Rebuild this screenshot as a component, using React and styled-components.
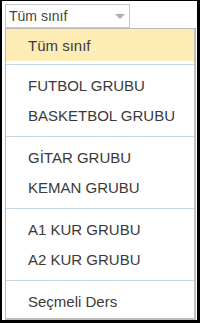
import React from 'react'
import styled, { createGlobalStyle } from 'styled-components'

const GlobalStyle = createGlobalStyle`
  html, body {
    margin: 0;
    padding: 0;
    background: #000;
  }
  * {
    box-sizing: border-box;
  }
`

const Frame = styled.div`
  width: 200px;
  height: 323px;
  background: #fff;
  border-style: solid;
  border-color: #000;
  border-width: 1px 3px 3px 2px;
  padding: 3px 0 0 3px;
  font-family: 'Liberation Sans', Arial, sans-serif;
  overflow: hidden;
`

const Select = styled.div`
  width: 125px;
  height: 24px;
  border: 1px solid #c8c8c8;
  display: flex;
  align-items: center;
  justify-content: space-between;
  padding: 0 4px 0 3px;
  font-size: 14px;
  color: #444;
`

const Arrow = styled.span`
  width: 0;
  height: 0;
  border-left: 5px solid transparent;
  border-right: 5px solid transparent;
  border-top: 5px solid #b0b0b0;
  margin-top: 1px;
`

const Panel = styled.div`
  width: 191px;
  height: 292px;
  border: 1px solid #b9b9b9;
  border-right: 2px solid #bdbdbd;
  border-bottom: 2px solid #bdbdbd;
  background: #fff;
`

const Group = styled.div`
  padding: ${(p) => (p.first ? '0 0 3px' : '5px 0 6px')};
  border-top: ${(p) => (p.first ? 'none' : '1px solid #c9d8e8')};
`

const Item = styled.div`
  height: ${(p) => (p.active ? '32px' : '30px')};
  display: flex;
  align-items: center;
  padding-left: 22px;
  font-size: 15px;
  color: #3a3a3a;
  background: ${(p) => (p.active ? '#fdedb5' : 'transparent')};
`

const groups = [
  ['Tüm sınıf'],
  ['FUTBOL GRUBU', 'BASKETBOL GRUBU'],
  ['GİTAR GRUBU', 'KEMAN GRUBU'],
  ['A1 KUR GRUBU', 'A2 KUR GRUBU'],
  ['Seçmeli Ders'],
]

const App = () => {
  return (
    <>
      <GlobalStyle />
      <Frame>
        <Select>
          <span>Tüm sınıf</span>
          <Arrow />
        </Select>
        <Panel>
          {groups.map((g, i) => (
            <Group key={i} first={i === 0}>
              {g.map((label) => (
                <Item key={label} active={label === 'Tüm sınıf'}>
                  {label}
                </Item>
              ))}
            </Group>
          ))}
        </Panel>
      </Frame>
    </>
  )
}

export default App
